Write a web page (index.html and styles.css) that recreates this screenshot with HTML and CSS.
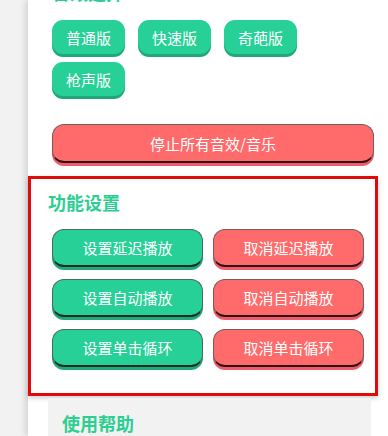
FILE: index.html
```html
<!DOCTYPE html>
<html lang="zh">
<head>
<meta charset="utf-8">
<link rel="stylesheet" href="styles.css">
</head>
<body>
<div class="page">
  <div class="side"></div>
  <main class="main">
    <section class="block">
      <h2 class="title cut">音效选择</h2>
      <div class="chips">
        <button class="chip">普通版</button>
        <button class="chip">快速版</button>
        <button class="chip">奇葩版</button>
        <button class="chip">枪声版</button>
      </div>
      <button class="btn red wide">停止所有音效/音乐</button>
    </section>
    <section class="box">
      <h2 class="title">功能设置</h2>
      <div class="grid">
        <button class="btn green">设置延迟播放</button>
        <button class="btn red">取消延迟播放</button>
        <button class="btn green">设置自动播放</button>
        <button class="btn red">取消自动播放</button>
        <button class="btn green">设置单击循环</button>
        <button class="btn red">取消单击循环</button>
      </div>
    </section>
    <section class="help">
      <h2 class="title">使用帮助</h2>
    </section>
  </main>
</div>
</body>
</html>
```

FILE: styles.css
```css
* { box-sizing: border-box; }
html, body { margin: 0; padding: 0; }
body {
  background: #f1f2f1;
  font-family: "Noto Sans CJK SC", "Noto Sans", sans-serif;
  height: 436px;
  overflow: hidden;
}
.page { display: flex; height: 436px; }
.side { width: 28px; flex: none; background: #f1f2f1; }
.main {
  flex: 1;
  background: #fff;
  box-shadow: -3px 0 6px rgba(0,0,0,0.12);
}
.title {
  margin: 0;
  color: #2bcf92;
  font-size: 18px;
  font-weight: 700;
  line-height: 24px;
}
.cut { margin-top: -20px; }
.block { padding: 0 14px 0 24px; }
.chips {
  display: flex;
  flex-wrap: wrap;
  gap: 8px 13px;
  margin-top: 16px;
  width: 260px;
}
.chip {
  width: 73px;
  height: 34px;
  border: none;
  border-radius: 11px;
  background: #26d097;
  color: #fff;
  font-family: inherit;
  font-size: 15px;
  box-shadow: 0 3px 0 #1fa97a;
  padding: 0;
}
.btn {
  height: 38px;
  border-radius: 12px;
  color: #fff;
  font-family: inherit;
  font-size: 15px;
  padding: 0;
  border: 1px solid #555;
  border-bottom-width: 2px;
}
.btn.green { background: #26d097; border-color: #4a6a5e; border-bottom-color: #1e2a25; box-shadow: 0 3px 0 #1fa97a; }
.btn.red { background: #ff6a6a; border-color: #7a5a5a; border-bottom-color: #2a1515; box-shadow: 0 3px 0 #f05a6a; }
.wide { display: block; width: 322px; margin-top: 28px; height: 39px; }
.box {
  margin: 13px 11px 0 0;
  border: 3px solid #e00a0a;
  padding: 11px 11px 26px 17px;
  box-shadow: 0 2px 5px rgba(0,0,0,0.2);
}
.grid {
  display: grid;
  grid-template-columns: 151px 151px;
  column-gap: 10px;
  row-gap: 12px;
  margin-top: 15px;
  padding-left: 4px;
}
.help {
  margin: 2px 18px 0 20px;
  background: #f1f2f1;
  height: 60px;
  padding: 13px 14px;
}
```
